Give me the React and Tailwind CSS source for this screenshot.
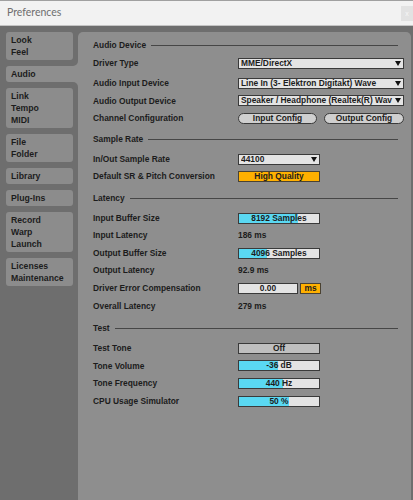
import React from "react";

const Tri = () => (
  <svg width="6" height="5" viewBox="0 0 6 5" className="shrink-0">
    <polygon points="0,0 6,0 3,5" fill="#111" />
  </svg>
);

const Row = ({ label, children, mt = "" }) => (
  <div className={"flex items-center h-[17.6px] " + mt}>
    <div className="w-[145px] shrink-0 whitespace-nowrap">{label}</div>
    <div className="flex items-center">{children}</div>
  </div>
);

const Header = ({ title, mt = "" }) => (
  <div className={"flex items-center h-[17.6px] mr-[13px] " + mt}>
    <span className="whitespace-nowrap">{title}</span>
    <div className="flex-1 ml-[5px] h-px bg-[#464646]" />
  </div>
);

const Dropdown = ({ text, w }) => (
  <div className={"flex items-center h-[11px] border border-[#3a3a3a] bg-[#e4e4e4] pl-[2px] pr-[2px] overflow-hidden " + w}>
    <span className="flex-1 overflow-hidden whitespace-nowrap leading-[9px]">{text}</span>
    <Tri />
  </div>
);

const Pill = ({ text, w }) => (
  <div className={"flex items-center justify-center h-[11px] border border-[#3a3a3a] bg-[#cfcfcf] rounded-full leading-[9px] " + w}>
    {text}
  </div>
);

const Fill = ({ fill, text }) => (
  <div className="relative h-[11px] w-[82px] border border-[#3a3a3a] bg-[#e4e4e4] overflow-hidden">
    <div className="h-full bg-[#5ad8f2]" style={{ width: fill }} />
    <div className="absolute inset-0 flex items-center justify-center leading-[9px] whitespace-nowrap">{text}</div>
  </div>
);

const Tab = ({ lines, selected }) => (
  <div
    className={
      selected
        ? "relative w-[72px] bg-[#8e8e8e] rounded-l-[3px] pl-[5px] py-[2px]"
        : "w-[67px] bg-[#8c8c8c] rounded-[3px] pl-[5px] py-[2px]"
    }
  >
    {lines.map((l) => (
      <div key={l} className="h-[12px] leading-[12px] whitespace-nowrap">{l}</div>
    ))}
    {selected && (
      <>
        <div className="absolute right-0 top-[-5px] w-[5px] h-[5px] bg-[#8e8e8e]">
          <div className="w-full h-full bg-[#6e6e6e] rounded-br-[5px]" />
        </div>
        <div className="absolute right-0 bottom-[-5px] w-[5px] h-[5px] bg-[#8e8e8e]">
          <div className="w-full h-full bg-[#6e6e6e] rounded-tr-[5px]" />
        </div>
      </>
    )}
  </div>
);

export default function App() {
  return (
    <div className="w-[413px] h-[500px] bg-[#6e6e6e] flex flex-col overflow-hidden font-['Liberation_Sans',Arial,sans-serif] text-[#1c1c1c]">
      <div className="h-[26px] shrink-0 bg-[#f2f2f2] border-t border-[#a0a0a0] border-b border-b-[#c4c4c4] flex items-center justify-between pl-[7px]">
        <span className="font-['Lato',sans-serif] text-[10.5px] text-[#6e6e6e]">Preferences</span>
        <div className="w-[12px] h-[15px] bg-[#e2e2e2] flex items-center justify-center text-[7px] text-[#f7f7f7] leading-none">x</div>
      </div>
      <div className="flex flex-1 pt-[6px]">
        <div className="w-[78px] shrink-0 pl-[6px] flex flex-col gap-[6px] font-bold text-[8.7px]">
          <Tab lines={["Look", "Feel"]} />
          <Tab lines={["Audio"]} selected />
          <Tab lines={["Link", "Tempo", "MIDI"]} />
          <Tab lines={["File", "Folder"]} />
          <Tab lines={["Library"]} />
          <Tab lines={["Plug-Ins"]} />
          <Tab lines={["Record", "Warp", "Launch"]} />
          <Tab lines={["Licenses", "Maintenance"]} />
        </div>
        <div className="flex-1 bg-[#8e8e8e] rounded-t-[5px] mr-[2px] pl-[15px] pt-[5px] font-bold text-[8.4px]">
          <Header title="Audio Device" />
          <Row label="Driver Type">
            <Dropdown text="MME/DirectX" w="w-[166px]" />
          </Row>
          <Row label="Audio Input Device" mt="mt-[2.4px]">
            <Dropdown text="Line In (3- Elektron Digitakt) Wave" w="w-[166px]" />
          </Row>
          <Row label="Audio Output Device">
            <Dropdown text="Speaker / Headphone (Realtek(R) Wav" w="w-[166px]" />
          </Row>
          <Row label="Channel Configuration">
            <div className="flex gap-[7px]">
              <Pill text="Input Config" w="w-[79px]" />
              <Pill text="Output Config" w="w-[80px]" />
            </div>
          </Row>
          <Header title="Sample Rate" mt="mt-[3px]" />
          <Row label="In/Out Sample Rate" mt="mt-[2.4px]">
            <Dropdown text="44100" w="w-[82px]" />
          </Row>
          <Row label="Default SR & Pitch Conversion">
            <div className="h-[11px] w-[82px] border border-[#4a4232] bg-[#ffb000] flex items-center justify-center leading-[9px]">High Quality</div>
          </Row>
          <Header title="Latency" mt="mt-[3.7px]" />
          <Row label="Input Buffer Size" mt="mt-[2.4px]">
            <Fill fill="59px" text="8192 Samples" />
          </Row>
          <Row label="Input Latency">
            <span>186 ms</span>
          </Row>
          <Row label="Output Buffer Size">
            <Fill fill="28px" text="4096 Samples" />
          </Row>
          <Row label="Output Latency">
            <span>92.9 ms</span>
          </Row>
          <Row label="Driver Error Compensation">
            <div className="flex gap-[2px]">
              <div className="h-[11px] w-[60px] border border-[#3a3a3a] bg-[#e4e4e4] flex items-center justify-center leading-[9px]">0.00</div>
              <div className="h-[11px] w-[21px] border border-[#4a4232] bg-[#ffb000] flex items-center justify-center leading-[9px]">ms</div>
            </div>
          </Row>
          <Row label="Overall Latency">
            <span>279 ms</span>
          </Row>
          <Header title="Test" mt="mt-[4.8px]" />
          <Row label="Test Tone" mt="mt-[2.4px]">
            <div className="h-[11px] w-[82px] border border-[#3a3a3a] bg-[#bfbfbf] flex items-center justify-center leading-[9px]">Off</div>
          </Row>
          <Row label="Tone Volume">
            <Fill fill="39px" text="-36 dB" />
          </Row>
          <Row label="Tone Frequency">
            <Fill fill="44px" text="440 Hz" />
          </Row>
          <Row label="CPU Usage Simulator">
            <Fill fill="50px" text="50 %" />
          </Row>
        </div>
      </div>
    </div>
  );
}
